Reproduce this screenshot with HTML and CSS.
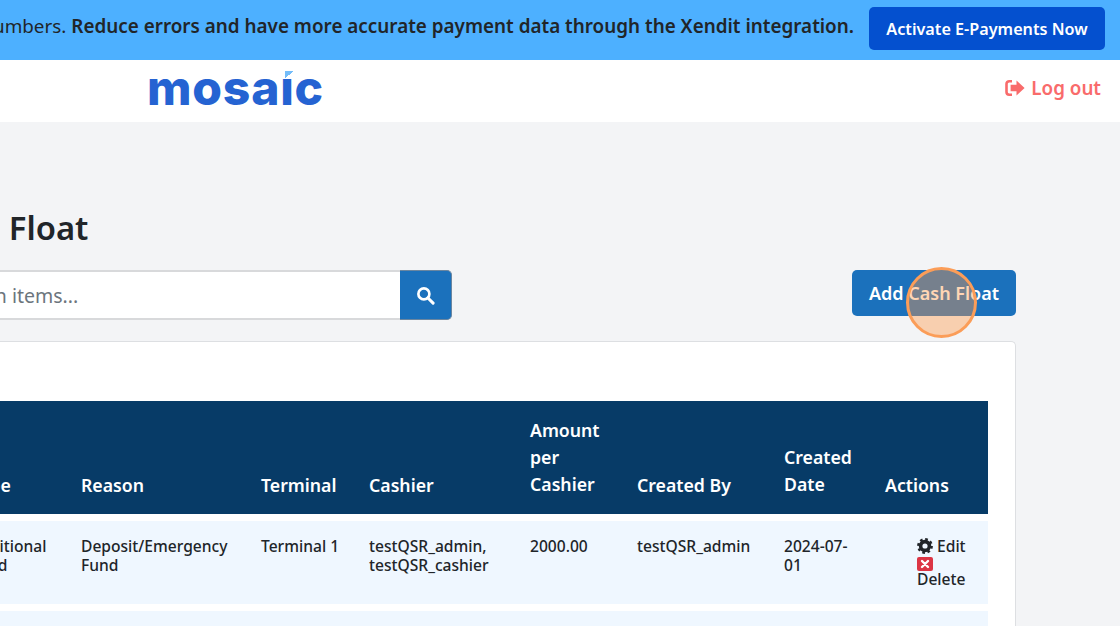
FILE: index.html
```html
<!DOCTYPE html>
<html lang="en">
<head>
  <meta charset="UTF-8">
  <title>Cash Float</title>
  <link rel="stylesheet" href="styles.css">
</head>
<body>
  <div class="page">

    <div class="banner">
      <p class="banner-text">Avoid manually entering numbers. <b>Reduce errors and have more accurate payment data through the Xendit integration.</b></p>
      <button class="activate-btn">Activate E-Payments Now</button>
    </div>

    <header class="topbar">
      <div class="logo">mosaic<span class="logo-mark"></span></div>
      <a class="logout" href="#">
        <svg class="logout-icon" viewBox="0 0 20 18">
          <path d="M7 2.2H4.2A2.7 2.7 0 0 0 1.5 4.9v8.2a2.7 2.7 0 0 0 2.7 2.7H7" fill="none" stroke="currentColor" stroke-width="2.6"/>
          <path d="M11.5 1.4 19.6 9l-8.1 7.6v-4.4H5.6V5.8h5.9z" fill="currentColor"/>
        </svg>
        Log out
      </a>
    </header>

    <main class="content">
      <h1 class="title">Cash Float</h1>

      <div class="toolbar">
        <form class="search">
          <input class="search-input" type="text" placeholder="Search in items...">
          <button class="search-btn" type="button">
            <svg viewBox="0 0 20 20" width="19" height="19">
              <circle cx="8.3" cy="8.3" r="5.8" fill="none" stroke="#fff" stroke-width="2.8"/>
              <path d="M12.6 12.6 18 18" stroke="#fff" stroke-width="3.2" stroke-linecap="round"/>
            </svg>
          </button>
        </form>
        <button class="add-btn">Add Cash Float</button>
      </div>

      <section class="card">
        <table class="float-table">
          <colgroup>
            <col class="col-type"><col class="col-reason"><col class="col-terminal"><col class="col-cashier">
            <col class="col-amount"><col class="col-by"><col class="col-date"><col class="col-actions">
          </colgroup>
          <thead>
            <tr>
              <th>Type</th><th>Reason</th><th>Terminal</th><th>Cashier</th>
              <th>Amount per Cashier</th><th>Created By</th><th>Created Date</th><th>Actions</th>
            </tr>
          </thead>
          <tbody>
            <tr>
              <td>Additional Fund</td>
              <td>Deposit/Emergency Fund</td>
              <td>Terminal 1</td>
              <td>testQSR_admin, testQSR_cashier</td>
              <td>2000.00</td>
              <td>testQSR_admin</td>
              <td>2024-07-01</td>
              <td class="actions">
                <a class="action-link" href="#">
                  <svg class="icon-gear" viewBox="0 0 16 16">
                    <circle cx="8" cy="8" r="4.4" fill="none" stroke="#212529" stroke-width="3.6"/>
                    <circle cx="8" cy="8" r="6.6" fill="none" stroke="#212529" stroke-width="2.6" stroke-dasharray="2.6 2.58"/>
                  </svg>
                  Edit
                </a>
                <a class="action-link" href="#">
                  <svg class="icon-delete" viewBox="0 0 16 14">
                    <rect width="16" height="14" rx="2" fill="#dc3545"/>
                    <path d="M5 4l6 6M11 4l-6 6" stroke="#fff" stroke-width="2.4" stroke-linecap="round"/>
                  </svg>
                  Delete
                </a>
              </td>
            </tr>
            <tr>
              <td></td><td></td><td></td><td></td><td></td><td></td><td></td><td></td>
            </tr>
          </tbody>
        </table>
      </section>
    </main>

    <div class="click-ring"></div>
  </div>
</body>
</html>
```

FILE: styles.css
```css
* { box-sizing: border-box; }
html, body {
  margin: 0;
  height: 626px;
  overflow: hidden;
}
body {
  font-family: "Noto Sans", Arial, sans-serif;
  color: #212529;
  background: #f3f4f6;
}

/* the shot is scrolled sideways, so the page starts left of the window */
.page {
  position: relative;
  width: 1320px;
  margin-left: -200px;
}

.banner {
  display: flex;
  justify-content: flex-end;
  align-items: center;
  gap: 15px;
  height: 60px;
  padding: 0 15px 0 0;
  background: #4db0ff;
  white-space: nowrap;
}
.banner-text {
  flex: none;
  margin: 0 0 8px;
  font-size: 18.87px;
  color: #212529;
}
.banner-text b { font-weight: 600; }
.activate-btn {
  flex: none;
  width: 236px;
  height: 43px;
  margin-bottom: 3px;
  border: none;
  border-radius: 5px;
  background: #0450cf;
  color: #fff;
  font: 600 16.2px "Noto Sans", Arial, sans-serif;
}

.topbar {
  display: flex;
  justify-content: space-between;
  align-items: center;
  height: 62px;
  padding: 0 19px 0 347px;
  background: #fff;
}
.logo {
  position: relative;
  margin-bottom: 6px;
  font: 800 48px/1 Inter, Arial, sans-serif;
  letter-spacing: 0.8px;
  color: #2563d2;
}
.logo-mark {
  position: absolute;
  left: 135px;
  top: 2px;
  width: 15px;
  height: 12px;
  background: linear-gradient(to bottom right, #74bdf9 50%, transparent 50%) no-repeat 3px 5px / 9px 7px, #fff;
}
.logout {
  display: flex;
  align-items: center;
  gap: 6px;
  margin-bottom: 7px;
  font-size: 18.8px;
  font-weight: 600;
  color: #f96b6b;
  text-decoration: none;
}
.logout-icon { width: 20px; height: 18px; }

.content { padding: 0 104px 0 120px; }
.title {
  margin: 84px 0 20px 3px;
  font-size: 32.8px;
  font-weight: 600;
  line-height: 44px;
}

.toolbar {
  display: flex;
  justify-content: space-between;
  align-items: flex-start;
}
.search {
  display: flex;
  width: 562px;
  height: 50px;
  margin-left: -30px;
}
.search-input {
  flex: 1;
  min-width: 0;
  padding: 0 16px 0 31px;
  border: 2px solid #d8d9db;
  border-right: none;
  border-radius: 5px 0 0 5px;
  background: #fff;
  font: 19.5px "Noto Sans", Arial, sans-serif;
}
.search-input::placeholder { color: #6c757d; opacity: 1; }
.search-btn {
  display: flex;
  justify-content: center;
  align-items: center;
  width: 52px;
  border: 1px solid #6b86a0;
  border-left: none;
  border-radius: 0 5px 5px 0;
  background: #1b71bc;
}
.add-btn {
  width: 164px;
  height: 46px;
  border: none;
  border-radius: 5px;
  background: #1b71bc;
  color: #fff;
  font: 600 18px "Noto Sans", Arial, sans-serif;
}

.card {
  height: 285px;
  margin-top: 21px;
  padding: 52px 26px 0;
  border: 1px solid #dddfe2;
  border-bottom: none;
  border-radius: 5px 5px 0 0;
  background: #fff;
  overflow: hidden;
}
.float-table {
  width: 1041px;
  table-layout: fixed;
  border-collapse: separate;
  border-spacing: 0 7px;
}
.col-type { width: 122px; }
.col-reason { width: 180px; }
.col-terminal { width: 108px; }
.col-cashier { width: 161px; }
.col-amount { width: 107px; }
.col-by { width: 147px; }
.col-date { width: 101px; }
.col-actions { width: 115px; }

th, td {
  padding-left: 12px;
  padding-right: 12px;
  text-align: left;
}
th:first-child, td:first-child { padding-left: 23px; }
th {
  padding-top: 16px;
  padding-bottom: 16px;
  background: #073b67;
  color: #fff;
  font-size: 17.7px;
  font-weight: 600;
  line-height: 27px;
  vertical-align: bottom;
}
th:not(:nth-child(5)):not(:nth-child(7)) { padding-bottom: 15px; }
td {
  height: 83px;
  padding-top: 16px;
  background: #eff7ff;
  font-size: 15.6px;
  font-weight: 500;
  line-height: 19px;
  vertical-align: top;
}
td.actions { padding: 17px 0 0 44px; }
.action-link {
  display: block;
  color: #212529;
  text-decoration: none;
  line-height: 17px;
}
.icon-gear {
  width: 16px;
  height: 16px;
  vertical-align: -2px;
}
.icon-delete {
  display: block;
  width: 16px;
  height: 14px;
  margin-top: 2px;
}

.click-ring {
  position: absolute;
  left: 1106px;
  top: 267px;
  width: 71px;
  height: 71px;
  border: 3px solid #fb9d58;
  border-radius: 50%;
  background: rgba(255, 152, 70, 0.4);
}
```
